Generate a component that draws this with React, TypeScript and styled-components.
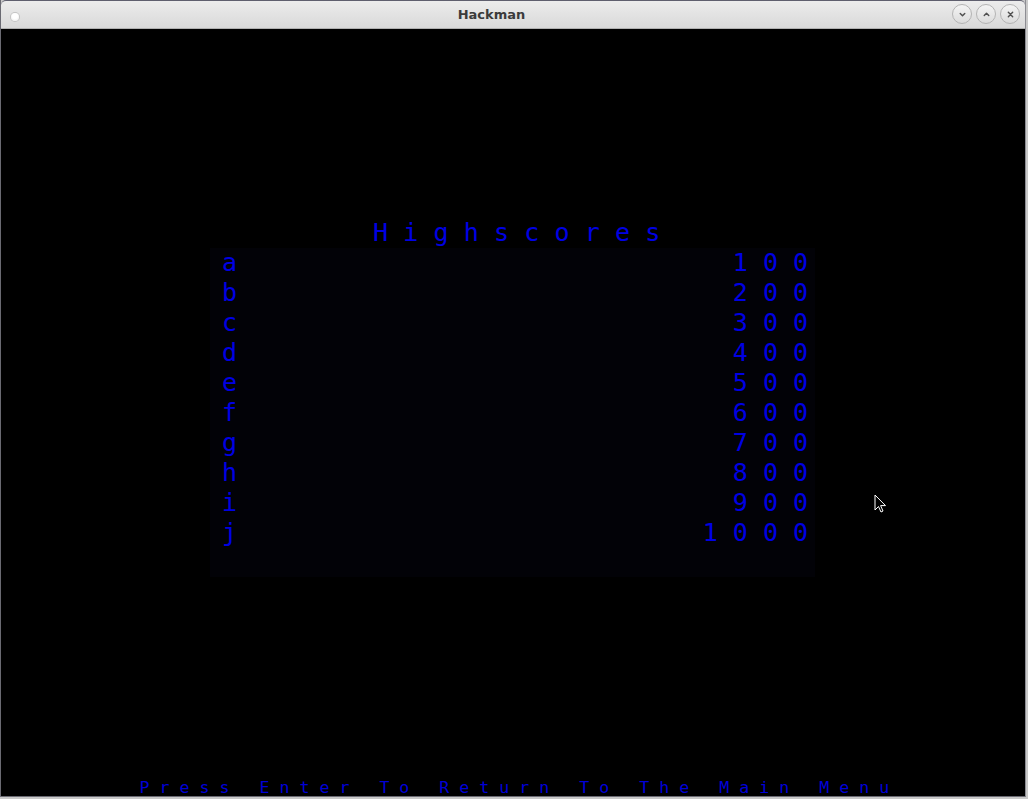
import React from "react";
import styled, { createGlobalStyle } from "styled-components";

const GlobalStyle = createGlobalStyle`
  html, body {
    margin: 0;
    padding: 0;
    width: 1028px;
    height: 799px;
    overflow: hidden;
    background: #c9c9c9;
  }
`;

const Window = styled.div`
  width: 1026px;
  height: 797px;
  display: flex;
  flex-direction: column;
  box-sizing: border-box;
  border-left: 1px solid #6a6a72;
  border-right: 1px solid #8d8d93;
  border-bottom: 1px solid #6a6a72;
`;

const TitleBar = styled.div`
  height: 29px;
  box-sizing: border-box;
  display: grid;
  grid-template-columns: 1fr auto 1fr;
  align-items: center;
  padding: 0 5px 0 10px;
  border-top: 1px solid #5f5f6e;
  border-bottom: 1px solid #b0b0b0;
  border-radius: 5px 5px 0 0;
  background: linear-gradient(#ececec, #d9d9d9);
`;

const AppDot = styled.span`
  width: 8px;
  height: 8px;
  margin-top: 4px;
  border-radius: 50%;
  background: radial-gradient(circle at 50% 40%, #ffffff 40%, #e6e6e6 100%);
  box-shadow: 0 0 0 1px #c4c4c4;
`;

const Title = styled.span`
  font-family: "DejaVu Sans", sans-serif;
  font-weight: bold;
  font-size: 13px;
  color: #3b3b3b;
  margin-left: -48px;
  margin-top: -1px;
`;

const Controls = styled.div`
  display: flex;
  justify-content: flex-end;
  gap: 4px;
  margin-top: -1px;
`;

const CtrlButton = styled.span`
  width: 18px;
  height: 18px;
  border-radius: 50%;
  border: 1px solid #b4b4b4;
  background: linear-gradient(#f4f4f4, #dcdcdc);
  display: flex;
  align-items: center;
  justify-content: center;
  color: #505050;
`;

const Content = styled.div`
  flex: 1;
  position: relative;
  background: #000000;
  display: flex;
  flex-direction: column;
  overflow: hidden;
  font-family: "DejaVu Sans Mono", monospace;
  color: #0000e4;
`;

const Heading = styled.div`
  margin-top: 189px;
  margin-left: 372px;
  font-size: 25px;
  line-height: 30px;
  letter-spacing: 15.2px;
  white-space: pre;
`;

const Panel = styled.div`
  margin-left: 209px;
  width: 605px;
  box-sizing: border-box;
  padding: 0 0 29px 12px;
  background: #020207;
  display: flex;
  flex-direction: column;
`;

const Row = styled.div`
  display: flex;
  justify-content: space-between;
  font-size: 25px;
  line-height: 30px;
  letter-spacing: 15px;
  white-space: pre;
`;

const Score = styled.span`
  margin-right: -8px;
`;

const Footer = styled.div`
  margin-top: auto;
  margin-bottom: -2px;
  margin-left: 138.5px;
  font-size: 16.6px;
  line-height: 20px;
  letter-spacing: 10px;
  white-space: pre;
  color: #0000d8;
`;

const Cursor = styled.svg`
  position: absolute;
  left: 873px;
  top: 465px;
`;

const scores: [string, number][] = [
  ["a", 100],
  ["b", 200],
  ["c", 300],
  ["d", 400],
  ["e", 500],
  ["f", 600],
  ["g", 700],
  ["h", 800],
  ["i", 900],
  ["j", 1000],
];

export default function App() {
  return (
    <>
      <GlobalStyle />
      <Window>
        <TitleBar>
          <AppDot />
          <Title>Hackman</Title>
          <Controls>
            <CtrlButton>
              <svg width="9" height="9" viewBox="0 0 10 10">
                <path d="M2.5 3.8 L5 6.3 L7.5 3.8" fill="none" stroke="currentColor" strokeWidth="1.6" strokeLinecap="round" strokeLinejoin="round" />
              </svg>
            </CtrlButton>
            <CtrlButton>
              <svg width="9" height="9" viewBox="0 0 10 10">
                <path d="M2.5 6.2 L5 3.7 L7.5 6.2" fill="none" stroke="currentColor" strokeWidth="1.6" strokeLinecap="round" strokeLinejoin="round" />
              </svg>
            </CtrlButton>
            <CtrlButton>
              <svg width="9" height="9" viewBox="0 0 10 10">
                <path d="M2.6 2.6 L7.4 7.4 M7.4 2.6 L2.6 7.4" fill="none" stroke="currentColor" strokeWidth="1.6" strokeLinecap="round" />
              </svg>
            </CtrlButton>
          </Controls>
        </TitleBar>
        <Content>
          <Heading>Highscores</Heading>
          <Panel>
            {scores.map(([name, value]) => (
              <Row key={name}>
                <span>{name}</span>
                <Score>{value}</Score>
              </Row>
            ))}
          </Panel>
          <Footer>Press Enter To Return To The Main Menu</Footer>
          <Cursor width="13" height="20" viewBox="0 0 13 20">
            <path
              d="M1 1 L1 16 L4.5 12.5 L7 18 L9 17 L6.6 11.6 L11.5 11.6 Z"
              fill="#000"
              stroke="#fff"
              strokeWidth="1"
              strokeLinejoin="miter"
            />
          </Cursor>
        </Content>
      </Window>
    </>
  );
}
